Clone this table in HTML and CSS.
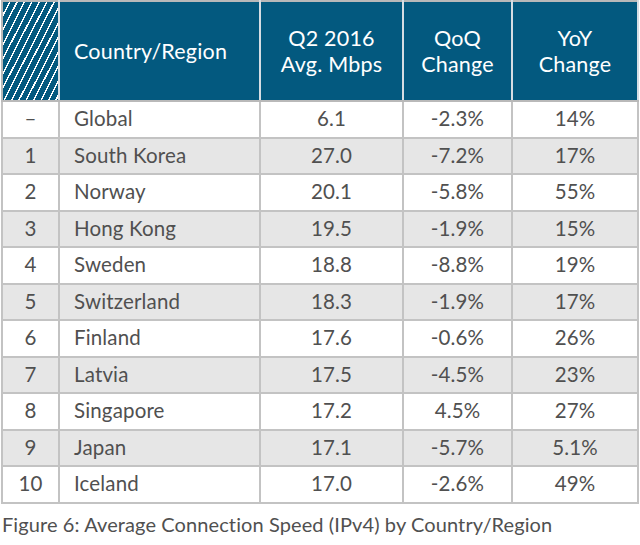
FILE: index.html
```html
<!DOCTYPE html>
<html>
<head>
<meta charset="utf-8">
<link rel="stylesheet" href="styles.css">
</head>
<body>
<div class="figure">
<table class="speed">
  <colgroup>
    <col class="c-rank"><col class="c-name"><col class="c-avg"><col class="c-qoq"><col class="c-yoy">
  </colgroup>
  <thead>
    <tr>
      <th class="hatch"></th>
      <th class="left">Country/Region</th>
      <th>Q2 2016<br>Avg. Mbps</th>
      <th>QoQ<br>Change</th>
      <th>YoY<br>Change</th>
    </tr>
  </thead>
  <tbody>
    <tr><td>–</td><td class="left">Global</td><td>6.1</td><td>-2.3%</td><td>14%</td></tr>
    <tr class="alt"><td>1</td><td class="left">South Korea</td><td>27.0</td><td>-7.2%</td><td>17%</td></tr>
    <tr><td>2</td><td class="left">Norway</td><td>20.1</td><td>-5.8%</td><td>55%</td></tr>
    <tr class="alt"><td>3</td><td class="left">Hong Kong</td><td>19.5</td><td>-1.9%</td><td>15%</td></tr>
    <tr><td>4</td><td class="left">Sweden</td><td>18.8</td><td>-8.8%</td><td>19%</td></tr>
    <tr class="alt"><td>5</td><td class="left">Switzerland</td><td>18.3</td><td>-1.9%</td><td>17%</td></tr>
    <tr><td>6</td><td class="left">Finland</td><td>17.6</td><td>-0.6%</td><td>26%</td></tr>
    <tr class="alt"><td>7</td><td class="left">Latvia</td><td>17.5</td><td>-4.5%</td><td>23%</td></tr>
    <tr><td>8</td><td class="left">Singapore</td><td>17.2</td><td>4.5%</td><td>27%</td></tr>
    <tr class="alt"><td>9</td><td class="left">Japan</td><td>17.1</td><td>-5.7%</td><td>5.1%</td></tr>
    <tr><td>10</td><td class="left">Iceland</td><td>17.0</td><td>-2.6%</td><td>49%</td></tr>
  </tbody>
</table>
<p class="caption">Figure 6: Average Connection Speed (IPv4) by Country/Region</p>
</div>
</body>
</html>
```

FILE: styles.css
```css
html, body {
  margin: 0;
  padding: 0;
  background: #ffffff;
}

.figure {
  padding: 0 0 0 1px;
  font-family: "Lato", "Liberation Sans", sans-serif;
  color: #505050;
  letter-spacing: 0.15px;
}

.speed {
  border-collapse: collapse;
  table-layout: fixed;
  width: 637px;
  border: 2px solid #b9b9b9;
}

.c-rank { width: 57px; }
.c-name { width: 201px; }
.c-avg { width: 143px; }
.c-qoq { width: 109px; }
.c-yoy { width: 126px; }

.speed th {
  height: 98px;
  background: #03597f;
  color: #ffffff;
  font-weight: 400;
  font-size: 21.5px;
  line-height: 26px;
  letter-spacing: 0.2px;
  text-align: center;
  vertical-align: middle;
  padding: 0;
  border-left: 2px solid #d6dde3;
  border-right: 2px solid #d6dde3;
  border-bottom: 2px solid #b9b9b9;
}

.speed th.hatch {
  background: repeating-linear-gradient(
    117deg,
    #03597f 0px,
    #03597f 5.2px,
    #ffffff 5.2px,
    #ffffff 6.6px
  );
  border-left: none;
}

.speed td {
  height: 32.5px;
  padding: 0 0 2px 0;
  font-size: 20.5px;
  text-align: center;
  vertical-align: middle;
  border: 2px solid #c3c3c3;
}

.speed .left {
  text-align: left;
  padding-left: 14px;
}

.speed tr.alt td {
  background: #e6e6e6;
}

.caption {
  margin: 8px 0 0 1px;
  font-size: 20px;
  line-height: 24px;
  letter-spacing: 0.1px;
  color: #505050;
}
```
